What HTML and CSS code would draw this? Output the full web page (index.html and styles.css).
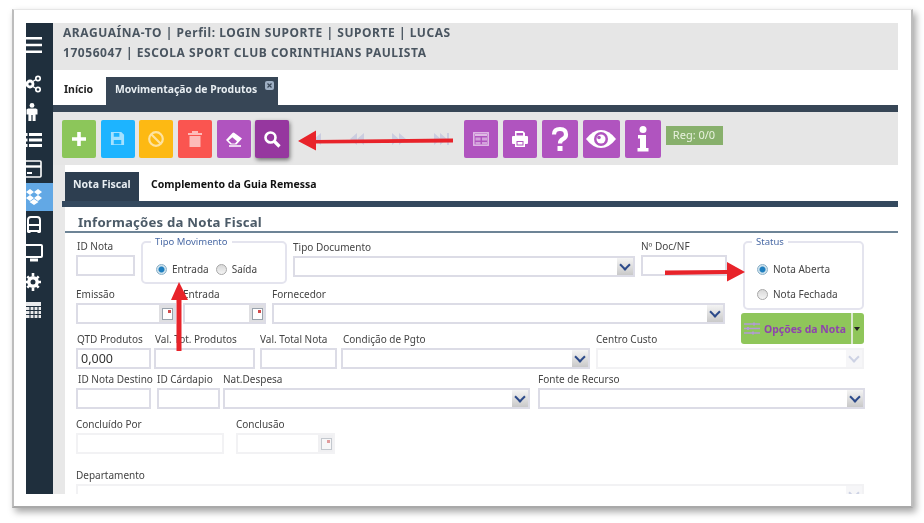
FILE: index.html
```html
<!DOCTYPE html>
<html lang="pt-BR">
<head>
<meta charset="utf-8">
<title>Movimentação de Produtos</title>
<link rel="stylesheet" href="styles.css">
</head>
<body>
<div class="frame">
  <div class="app">
    <aside class="side">
      <div class="side-item burger"><svg width="16" height="18" viewBox="0 0 16 18"><path d="M0 1h16v2.4H0zM0 7.8h16v2.4H0zM0 14.6h16V17H0z" fill="#fff"/></svg></div>
      <div class="side-item"><svg width="16" height="18" viewBox="0 0 16 18" fill="none" stroke="#fff"><circle cx="4" cy="9" r="3" stroke-width="2.8"/><circle cx="12" cy="3.500" r="2.200" stroke-width="1.700"/><circle cx="12" cy="14.500" r="2.200" stroke-width="1.700"/><path d="M6 7l4-2.500M6 11l4 2.500" stroke-width="1.400"/></svg></div>
      <div class="side-item"><svg width="12" height="18" viewBox="0 0 12 18" fill="#fff"><circle cx="6" cy="2.400" r="2.400"/><path d="M2 5.500h8l1.500 1v5H9.600V18H6.600v-6H5.400v6H2.400v-6.500H.5v-5z"/></svg></div>
      <div class="side-item"><svg width="16" height="18" viewBox="0 0 16 18" fill="#fff"><path d="M0 2h1.500v3H0zM3 2h13v3H3zM0 7.500h1.500v3H0zM3 7.500h13v3H3zM0 13h1.500v3H0zM3 13h13v3H3z"/></svg></div>
      <div class="side-item"><svg width="16" height="18" viewBox="0 0 16 18" fill="none" stroke="#fff" stroke-width="1.600"><rect x="-2" y="1" width="17" height="16" rx="1"/><path d="M0 6.500h15" stroke-width="2.400"/><path d="M1 13h5" stroke-width="2"/></svg></div>
      <div class="side-item on"><svg width="16" height="18" viewBox="0 0 16 18" fill="#fff"><path d="M0 4l4-3 4 3-4 3zM8 4l4-3 4 3-4 3zM0 10l4-3 4 3-4 3zM8 10l4-3 4 3-4 3zM3.500 14l4.500-3 4.500 3-4.500 3z"/></svg></div>
      <div class="side-item"><svg width="16" height="18" viewBox="0 0 16 18" fill="none" stroke="#fff" stroke-width="2"><path d="M2 15V4q0-3 3-3h6q3 0 3 3v11z"/><path d="M2 9h12"/><path d="M3 17v-2M13 17v-2" stroke-width="3"/></svg></div>
      <div class="side-item"><svg width="17" height="18" viewBox="0 0 17 18" fill="none" stroke="#fff" stroke-width="2"><rect x="-2" y="1" width="18" height="12" rx="1"/><path d="M4 16h8" stroke-width="3"/></svg></div>
      <div class="side-item"><svg width="16" height="18" viewBox="0 0 16 18" fill="none" stroke="#fff"><circle cx="7" cy="9" r="4.200" stroke-width="3.400"/><path d="M7 0v3M7 15v3M-1 9h3M12 9h3M1.300 3.300l2 2M10.700 12.700l2 2M1.300 14.700l2-2M10.700 5.300l2-2" stroke-width="2.600"/></svg></div>
      <div class="side-item"><svg width="16" height="18" viewBox="0 0 16 18" fill="#fff"><path d="M0 1h15v16H0z" opacity=".9"/><path d="M0 5.500h16M0 9.500h16M0 13.500h16M4 5v12M8 5v12M12 5v12" stroke="#1f2f3d" stroke-width="1.100"/></svg></div>
    </aside>
    <main class="main">
      <header class="header">
        <div>ARAGUAÍNA-TO | Perfil: LOGIN SUPORTE | SUPORTE | LUCAS</div>
        <div>17056047 | ESCOLA SPORT CLUB CORINTHIANS PAULISTA</div>
      </header>
      <nav class="tabs">
        <span class="tab">Início</span>
        <span class="tab active">Movimentação de Produtos<svg class="tab-close" width="9" height="9" viewBox="0 0 9 9"><rect width="9" height="9" rx="2" fill="#9fb0c4"/><path d="M2.500 2.500l4 4M6.500 2.500l-4 4" stroke="#374656" stroke-width="1.200"/></svg></span>
      </nav>
      <div class="bar"></div>
      <div class="toolbar">
        <button class="btn green"><svg width="18" height="18" viewBox="0 0 18 18"><path d="M7.200 2h3.600v5.200H16v3.600h-5.200V16H7.200v-5.200H2V7.200h5.200z" fill="#fff"/></svg></button>
        <button class="btn blue"><svg width="15" height="15" viewBox="0 0 16 16" class="faint"><path d="M1 1h11l3 3v11H1z" fill="#fff"/><path d="M4 2h6v4H4zM4 9.500h8V14H4z" fill="#1db4ff"/></svg></button>
        <button class="btn orange"><svg width="18" height="18" viewBox="0 0 18 18" class="faint" fill="none" stroke="#fff" stroke-width="2.200"><circle cx="9" cy="9" r="6.800"/><path d="M4.500 4.500l9 9"/></svg></button>
        <button class="btn red"><svg width="16" height="18" viewBox="0 0 16 18" class="faint" fill="#fff"><path d="M1 3h14v2H1zM5 1h6v2H5zM2.500 6h11v11h-11z"/></svg></button>
        <button class="btn purple"><svg width="18" height="16" viewBox="0 0 18 16"><path d="M1 9L7.500 2q1-1 2 0l7.500 5.500-5.500 6H5.500z" fill="#fff"/><path d="M3.500 9.500l3.200 3h3.300l2-2.300-4.700-3.900z" fill="#b054bf"/><path d="M4 15h12" stroke="#fff" stroke-width="1.500"/></svg></button>
        <button class="btn purple-dark"><svg width="18" height="18" viewBox="0 0 18 18" fill="none" stroke="#fff"><circle cx="7.500" cy="7.500" r="5" stroke-width="2.600"/><path d="M11.500 11.500l5 5" stroke-width="3.200"/></svg></button>
        <div class="pager">
          <svg width="16" height="16" viewBox="0 0 16 16"><path d="M8 2v12L1 8zM15 2v12L8 8z"/></svg>
          <svg width="16" height="16" viewBox="0 0 16 16"><path d="M8 2v12L1 8zM15 2v12L8 8z"/></svg>
          <svg width="16" height="16" viewBox="0 0 16 16"><path d="M1 2v12l7-6zM8 2v12l7-6z"/></svg>
          <svg width="16" height="16" viewBox="0 0 16 16"><path d="M0 2v12l7-6zM6 2v12l7-6zM13 2h2v12h-2z"/></svg>
        </div>
        <button class="btn purple"><svg width="16" height="14" viewBox="0 0 16 14" class="faint"><rect x=".8" y=".8" width="14.400" height="12.400" fill="none" stroke="#fff" stroke-width="1.500"/><path d="M2 2h12v2H2z" fill="#fff"/><path d="M2.500 5.500h5v3h-5zM9 5.500h5v3H9zM2.500 10h5v2.300h-5zM9 10h5v2.300H9z" fill="#fff" opacity=".75"/></svg></button>
        <button class="btn purple"><svg width="18" height="18" viewBox="0 0 18 18" fill="#fff"><path d="M4 1h8l2 2v4H4z"/><path d="M1 7q0-1 1-1h14q1 0 1 1v6q0 1-1 1h-2v3H4v-3H2q-1 0-1-1z"/><path d="M5.500 11h7v4.500h-7zM5.500 3h6.500v2.500H5.500z" fill="#b054bf"/><path d="M6.500 12h5v2.500h-5z" fill="#fff"/></svg></button>
        <button class="btn purple wide"><svg width="18" height="26" viewBox="0 0 18 26" fill="none" stroke="#fff"><path d="M3 8.500Q3 3 9 3t6 5.500q0 3-3 4.500t-3 4.500" stroke-width="4.200"/><rect x="6.500" y="20" width="5" height="5" fill="#fff" stroke="none"/></svg></button>
        <button class="btn purple wider"><svg width="30" height="20" viewBox="0 0 30 20"><path d="M0 10Q7 1 15 1t15 9q-7 9-15 9T0 10z" fill="#fff"/><circle cx="15" cy="10" r="7" fill="#b054bf"/><circle cx="15" cy="10" r="4.500" fill="#fff"/><circle cx="13" cy="8.500" r="1.800" fill="#b054bf"/></svg></button>
        <button class="btn purple wide last"><svg width="12" height="26" viewBox="0 0 12 26" fill="#fff"><circle cx="6" cy="3.500" r="3.500"/><path d="M1 9h8v13h2.500v3.500H.5V22H3v-9.500H1z"/></svg></button>
        <span class="reg">Reg: 0/0</span>
      </div>
      <section class="content">
        <div class="subtabs">
          <span class="subtab active">Nota Fiscal</span>
          <span class="subtab">Complemento da Guia Remessa</span>
        </div>
        <div class="bar subbar"></div>
        <h2 class="title">Informações da Nota Fiscal</h2>
        <form class="form">
          <div class="row r1">
            <div class="field f-idnota"><label>ID Nota</label><span class="input"></span></div>
            <fieldset class="group g-tipo">
              <legend>Tipo Movimento</legend>
              <span class="radio on"></span><span class="rlabel">Entrada</span>
              <span class="radio second"></span><span class="rlabel">Saída</span>
            </fieldset>
            <div class="field f-tipodoc"><label>Tipo Documento</label><span class="input select"><i class="arrow"></i></span></div>
            <div class="field f-doc"><label>Nº Doc/NF</label><span class="input"></span></div>
            <fieldset class="group g-status">
              <legend>Status</legend>
              <div class="status-line"><span class="radio on"></span><span class="rlabel">Nota Aberta</span></div>
              <div class="status-line"><span class="radio"></span><span class="rlabel">Nota Fechada</span></div>
            </fieldset>
          </div>
          <div class="row r2">
            <div class="field f-emissao"><label>Emissão</label><span class="input date"><i class="cal"></i></span></div>
            <div class="field f-entrada"><label>Entrada</label><span class="input date"><i class="cal"></i></span></div>
            <div class="field f-fornec"><label>Fornecedor</label><span class="input select"><i class="arrow"></i></span></div>
            <div class="options">
              <svg width="16" height="13" viewBox="0 0 16 13" fill="none" stroke="#b39ad6" stroke-width="1.300"><path d="M0 2h16M0 6.500h16M0 11h16"/><path d="M10 .5v3M4 5v3M9 9.500v3" stroke-width="1.800"/></svg>
              <span class="options-text">Opções da Nota</span>
              <i class="options-split"></i>
              <i class="caret"></i>
            </div>
          </div>
          <div class="row r3">
            <div class="field f-qtd"><label>QTD Produtos</label><span class="input value">0,000</span></div>
            <div class="field f-valprod"><label>Val. Tot. Produtos</label><span class="input"></span></div>
            <div class="field f-valnota"><label>Val. Total Nota</label><span class="input"></span></div>
            <div class="field f-cond"><label>Condição de Pgto</label><span class="input select"><i class="arrow"></i></span></div>
            <div class="field f-centro"><label>Centro Custo</label><span class="input select off"><i class="arrow"></i></span></div>
          </div>
          <div class="row r4">
            <div class="field f-dest"><label>ID Nota Destino</label><span class="input"></span></div>
            <div class="field f-card"><label>ID Cárdapio</label><span class="input"></span></div>
            <div class="field f-nat"><label>Nat.Despesa</label><span class="input select"><i class="arrow"></i></span></div>
            <div class="field f-fonte"><label>Fonte de Recurso</label><span class="input select"><i class="arrow"></i></span></div>
          </div>
          <div class="row r5">
            <div class="field f-por"><label>Concluído Por</label><span class="input off"></span></div>
            <div class="field f-conc"><label>Conclusão</label><span class="input date off"><i class="cal"></i></span></div>
          </div>
          <div class="row r6">
            <div class="field f-dep"><label>Departamento</label><span class="input select off"><i class="arrow"></i></span></div>
          </div>
        </form>
      </section>
    </main>
  </div>
</div>
<svg class="arrows" width="924" height="523" viewBox="0 0 924 523" fill="#e8232a">
  <path d="M453 138.500L316 140v-9.500L298 141l18 9.500V143.500l137-1z"/>
  <path d="M665 270.500L727 270v-8l18 10-18 9.500V274l-62 1z"/>
  <path d="M176.500 351V300H171l8-18 9 18h-6.500v51z"/>
</svg>
</body>
</html>
```

FILE: styles.css
```css
* { box-sizing: border-box; }
html, body { margin: 0; padding: 0; background: #fff; }
body {
  position: relative;
  width: 924px;
  height: 523px;
  overflow: hidden;
  font-family: "Noto Sans", "DejaVu Sans", sans-serif;
  color: #3c3c3c;
}

.frame {
  width: 901px;
  height: 499px;
  margin: 9px 0 0 12px;
  padding: 13px 13px 0 14px;
  background: #fff;
  border-left: 2px solid #bdbdbd;
  border-top: 1px solid #e6e6e6;
  border-right: 2px solid #bdbdbd;
  border-bottom: 2px solid #a9a9a9;
  box-shadow: 3px 4px 7px rgba(0, 0, 0, .35);
}
.app {
  display: flex;
  height: 471px;
  filter: blur(.45px);
  overflow: hidden;
  margin-left: -2px;
}

/* sidebar */
.side { width: 27px; flex: none; background: #1f2f3d; padding-top: 10px; overflow: hidden; }
.side-item { height: 28.300px; display: flex; align-items: center; }
.side-item svg { display: block; }
.side-item.burger { height: 23px; margin-bottom: 13.500px; }
.side-item.on { background: #62a8e5; }

/* main */
.main { flex: 1; min-width: 0; display: flex; flex-direction: column; background: #e8e8e8; overflow: hidden; }
.header {
  height: 47px;
  flex: none;
  padding-left: 10px;
  background: #e6e6e6;
  font-size: 12px;
  line-height: 20px;
  font-weight: 700;
  color: #4a5560;
  letter-spacing: .55px;
}
.tabs { height: 35px; flex: none; background: #fff; display: flex; align-items: flex-end; }
.tab {
  height: 28px;
  width: 53px;
  padding-left: 11px;
  line-height: 25px;
  font-size: 10.500px;
  font-weight: 700;
  color: #222;
}
.tab.active {
  position: relative;
  width: 172px;
  padding-left: 9px;
  font-size: 10.400px;
  background: #374656;
  color: #e8eef2;
}
.tab-close { position: absolute; right: 4px; top: 4px; }
.bar { height: 6.500px; flex: none; background: #374656; }

.toolbar {
  height: 53px;
  flex: none;
  padding: 8px 0 0 9px;
  background: #e6e6e6;
  display: flex;
  align-items: flex-start;
}
.btn {
  width: 34px;
  height: 38px;
  margin-right: 4.700px;
  padding: 0;
  border: 0;
  border-radius: 2px;
  display: flex;
  align-items: center;
  justify-content: center;
}
.btn.wide { width: 36px; margin-right: 5px; }
.btn.wider { width: 37px; margin-right: 5px; }
.btn.last { margin-right: 5px; }
.green { background: #8cc65a; }
.blue { background: #1db4ff; }
.orange { background: #fdb913; }
.red { background: #fa5550; }
.purple { background: #b054bf; }
.purple-dark { background: #96379f; box-shadow: 1px 2px 4px rgba(0, 0, 0, .5); }
.faint { opacity: .6; }
.pager {
  width: 170px;
  height: 38px;
  padding: 0 14px 0 12px;
  display: flex;
  align-items: center;
  justify-content: space-between;
  fill: #cbcde0;
}
.reg {
  margin-top: 6.500px;
  width: 57px;
  height: 19px;
  background: #88b06c;
  color: #e8f2de;
  font-size: 11px;
  line-height: 18px;
  text-align: center;
}

/* content */
.content { flex: 1; margin-left: 12px; background: #fff; padding-top: 7px; }
.subtabs { height: 29px; display: flex; align-items: stretch; }
.subtab { padding-left: 12px; font-size: 10.500px; font-weight: 700; line-height: 25px; color: #111; }
.subtab.active { width: 74px; padding-left: 8px; margin-right: 0; background: #2d3e50; color: #e8eef2; }
.subbar { margin-left: -3px; background: #34495e; }
.title {
  margin: 0;
  height: 26px;
  padding-left: 13px;
  border-bottom: 2px solid #6d8496;
  font-size: 13.200px;
  line-height: 30px;
  font-weight: 700;
  color: #4c5b68;
  letter-spacing: .2px;
}
.form { padding-left: 11px; padding-top: 6px; }
.row { display: flex; align-items: flex-start; }
.r1 { height: 48px; }
.r2 { height: 45px; }
.r3 { height: 40px; }
.r4 { height: 45px; }
.r5 { height: 51px; }
.r6 { height: 30px; }

.field { display: flex; flex-direction: column; flex: none; }
.field label { height: 14px; margin-bottom: 2px; font-size: 10px; line-height: 14px; color: #444; white-space: nowrap; }
.input {
  position: relative;
  display: block;
  height: 20.500px;
  border: 2px solid #dcdce6;
  background: #fff;
}
.input.off { border-color: #f2f2f4; }
.input.value { font-size: 12.500px; line-height: 17px; padding-left: 3px; color: #333; }
.select { padding-right: 18px; }
.arrow {
  position: absolute;
  right: 0;
  top: 0;
  bottom: 0;
  width: 16px;
  background: linear-gradient(#f4f4f4, #c9c9c9);
}
.arrow::after {
  content: "";
  position: absolute;
  left: 4px;
  top: 3px;
  width: 6px;
  height: 6px;
  border-right: 2px solid #2c4a8a;
  border-bottom: 2px solid #2c4a8a;
  transform: rotate(45deg);
}
.off .arrow { background: #f6f6f8; }
.off .arrow::after { border-color: #cdd2e4; }
.cal {
  position: absolute;
  right: 0;
  top: 0;
  bottom: 0;
  width: 15px;
  background: #dfdfe2;
}
.cal::after {
  content: "";
  position: absolute;
  left: 3px;
  top: 3px;
  width: 9px;
  height: 10px;
  background: radial-gradient(circle at 6.500px 2.500px, #d24a4a 1.500px, #fff 2px);
  border: 1px solid #98a2ac;
}
.off .cal { background: #f0f0f2; }
.off .cal::after { opacity: .5; }

.f-idnota { width: 59px; }
.f-idnota label { padding-left: 1px; }
.group {
  flex: none;
  margin: 0;
  padding: 0;
  min-width: 0;
  border: 2px solid #e4e4ee;
  border-radius: 5px;
}
.group legend {
  padding: 0 4px;
  margin-left: -5px;
  font-size: 9.500px;
  line-height: 12px;
  color: #4a6aa5;
}
.g-tipo {
  width: 146px;
  height: 48px;
  margin: -3px 0 0 6px;
  padding: 8px 0 0 13px;
  display: flex;
  align-items: center;
}
.g-tipo > * { flex: none; }
.radio {
  display: inline-block;
  flex: none;
  width: 11px;
  height: 11px;
  border-radius: 50%;
  border: 1px solid #a8a8a8;
  background: linear-gradient(#d8d8d8, #f4f4f4);
}
.radio.on { border-color: #8ab0c8; background: radial-gradient(circle, #1f7fbf 0, #1f7fbf 2.500px, #cfe3ee 3.500px); }
.radio.second { margin-left: 7px; }
.rlabel { margin-left: 5px; font-size: 10px; line-height: 14px; color: #444; }
.f-tipodoc { width: 342px; margin-left: 6px; padding-top: 1px; }
.f-doc { width: 86px; margin-left: 6px; padding-top: 0; }
.g-status {
  width: 121px;
  height: 74px;
  margin: -3px 0 0 16px;
  padding: 8.500px 0 0 12px;
}
.g-status legend { margin-left: -5px; }
.status-line { height: 25px; display: flex; align-items: center; }

.f-emissao { width: 100px; }
.f-entrada { width: 83px; margin-left: 7px; }
.f-fornec { width: 453px; margin-left: 6px; }
.options {
  position: relative;
  flex: none;
  width: 123px;
  height: 31px;
  margin: 26px 0 0 16px;
  padding-left: 3px;
  border-radius: 3px;
  background: #8fc65a;
  display: flex;
  align-items: center;
}
.options-text { margin-left: 4px; font-size: 10.400px; font-weight: 700; color: #8e44ad; white-space: nowrap; }
.options-split { position: absolute; left: 110px; top: 0; bottom: 0; width: 2px; background: #dce9cf; }
.caret {
  position: absolute;
  right: 4px;
  top: 14px;
  border: 3px solid transparent;
  border-top: 4px solid #222;
  border-bottom: 0;
}

.f-qtd { width: 75px; }
.f-qtd label { padding-left: 1px; }
.f-valprod { width: 101px; margin-left: 3px; }
.f-valprod label { padding-left: 1px; }
.f-valnota { width: 77px; margin-left: 5px; }
.f-cond { width: 249px; margin-left: 4px; }
.f-cond label { padding-left: 2px; }
.f-centro { width: 268px; margin-left: 6px; }

.f-dest { width: 75px; }
.f-dest label { padding-left: 2px; }
.f-card { width: 63px; margin-left: 6px; }
.f-nat { width: 307px; margin-left: 3px; }
.f-fonte { width: 327px; margin-left: 8px; }

.f-por { width: 148px; }
.f-conc { width: 99px; margin-left: 12px; }
.f-dep { width: 788px; }

.arrows { position: absolute; left: 0; top: 0; pointer-events: none; filter: blur(.3px); }
```
